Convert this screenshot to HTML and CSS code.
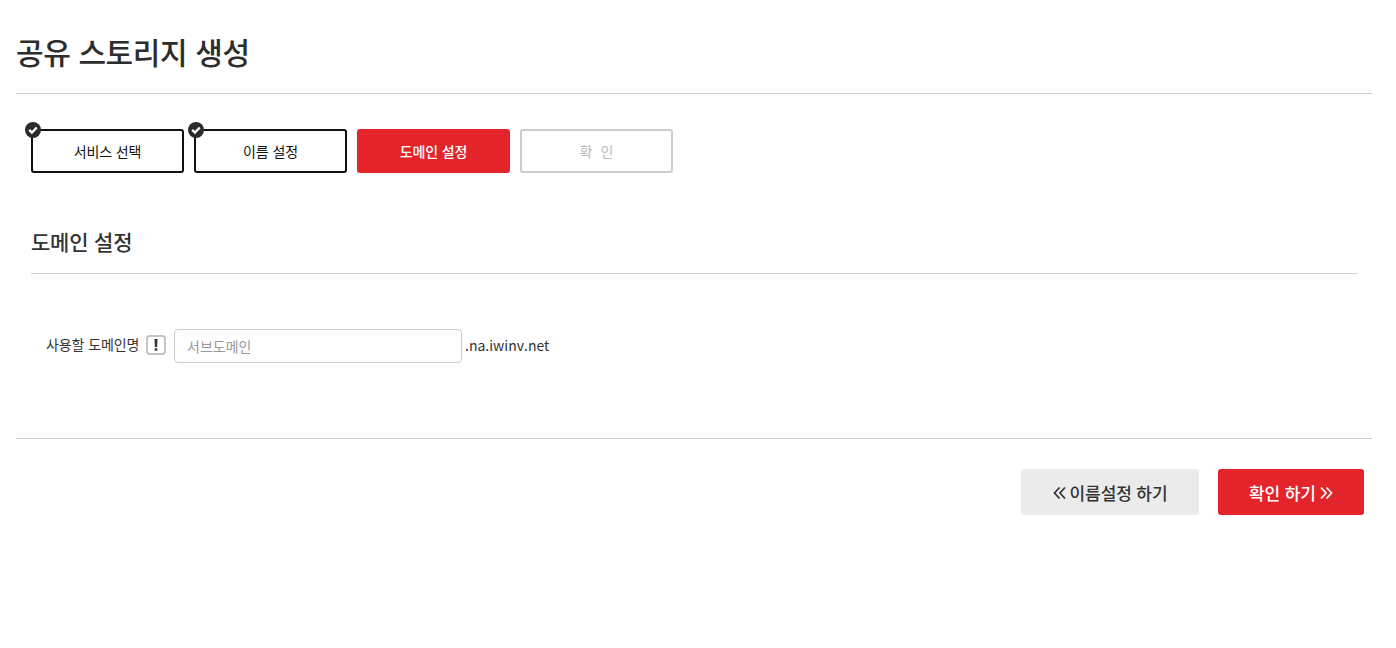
FILE: index.html
```
<!DOCTYPE html>
<html lang="ko">
<head>
<meta charset="utf-8">
<title>공유 스토리지 생성</title>
<link rel="stylesheet" href="styles.css">
</head>
<body>
<div class="page">
  <h1 class="title">공유 스토리지 생성</h1>
  <div class="inner">
    <ol class="steps">
      <li class="step done"><span class="check"><svg viewBox="0 0 16 16" width="16" height="16"><circle cx="8" cy="8" r="8" fill="#2b2b2b"/><path d="M4.200 7.800l2.700 2.700 4.900-5" fill="none" stroke="#fff" stroke-width="2.400"/></svg></span>서비스 선택</li>
      <li class="step done"><span class="check"><svg viewBox="0 0 16 16" width="16" height="16"><circle cx="8" cy="8" r="8" fill="#2b2b2b"/><path d="M4.200 7.800l2.700 2.700 4.900-5" fill="none" stroke="#fff" stroke-width="2.400"/></svg></span>이름 설정</li>
      <li class="step active">도메인 설정</li>
      <li class="step todo">확&nbsp;&nbsp;인</li>
    </ol>
    <h2 class="section">도메인 설정</h2>
    <div class="field">
      <label class="label">사용할 도메인명</label>
      <span class="hint"><svg viewBox="0 0 16 16" width="16" height="16"><path d="M6.500 2h3l-.4 8H6.900zM6.700 11.200h2.600v2.600H6.700z" fill="#333"/></svg></span>
      <input class="input" type="text" placeholder="서브도메인">
      <span class="suffix">.na.iwinv.net</span>
    </div>
  </div>
  <div class="actions">
    <button class="btn prev"><svg class="chev" viewBox="0 0 13 13" width="13" height="13"><path d="M6.500 1.500L1.500 7 6.500 12.500M12 1.500L7 7 12 12.500" fill="none" stroke="currentColor" stroke-width="1.700"/></svg>이름설정 하기</button>
    <button class="btn next">확인 하기<svg class="chev" viewBox="0 0 13 13" width="13" height="13"><path d="M1 1.500L6 7 1 12.500M6.500 1.500L11.500 7 6.500 12.500" fill="none" stroke="currentColor" stroke-width="1.700"/></svg></button>
  </div>
</div>
</body>
</html>
```
FILE: styles.css
```
* { box-sizing: border-box; }
html, body { margin: 0; padding: 0; background: #fff; }
body { font-family: "Noto Sans CJK KR", "Noto Sans", sans-serif; color: #333; }
.page { padding: 0 24px 0 16px; }
.title { margin: 0; height: 94px; padding-top: 29px; font-size: 30px; line-height: 44px; font-weight: 500; color: #2d2d2d; border-bottom: 1px solid #ccc; letter-spacing: -0.4px; }
.inner { padding: 0 15px; height: 345px; border-bottom: 1px solid #ccc; margin: 0; }
.steps { list-style: none; margin: 0; padding: 35px 0 0; display: flex; gap: 10px; }
.step { position: relative; width: 153px; height: 44px; border-radius: 3px; display: flex; align-items: center; justify-content: center; font-size: 14px; font-weight: 400; letter-spacing: -0.12px; }
.done { border: 2px solid #111; color: #111; background: #fff; }
.active { background: #e3242b; color: #fff; font-weight: 500; }
.todo { border: 2px solid #ccc; color: #bbb; letter-spacing: 0.1px; }
.check { position: absolute; left: -8px; top: -9px; width: 16px; height: 16px; display: flex; }
.section { margin: 0; height: 101px; padding-top: 52px; font-size: 21px; line-height: 32px; font-weight: 500; color: #333; border-bottom: 1px solid #ccc; letter-spacing: -0.2px; }
.field { display: flex; align-items: center; height: 34px; margin-top: 55px; padding-left: 15px; font-size: 14px; line-height: 20px; }
.label { color: #333; position: relative; top: -2px; letter-spacing: -0.1px; width: 94px; flex: none; }
.hint { width: 20px; height: 20px; margin: 0 8px 0 6px; border: 2px solid #c4c4c4; border-radius: 4px; display: flex; align-items: center; justify-content: center; position: relative; top: -1px; }
.input { width: 288px; height: 34px; border: 1px solid #ccc; border-radius: 4px; padding: 0 12px; font: inherit; color: #333; }
.input::placeholder { color: #999; }
.suffix { margin-left: 3px; font-size: 14px; position: relative; top: -1px; }
.actions { display: flex; justify-content: flex-end; gap: 19px; padding: 30px 8px 0 0; }
.btn { height: 46px; border: 0; border-radius: 3px; font-family: inherit; font-size: 17px; font-weight: 500; letter-spacing: -0.1px; display: flex; align-items: center; justify-content: center; gap: 4px; }
.prev { width: 178px; background: #ebebeb; color: #333; }
.next { width: 146px; background: #e3242b; color: #fff; }
```
